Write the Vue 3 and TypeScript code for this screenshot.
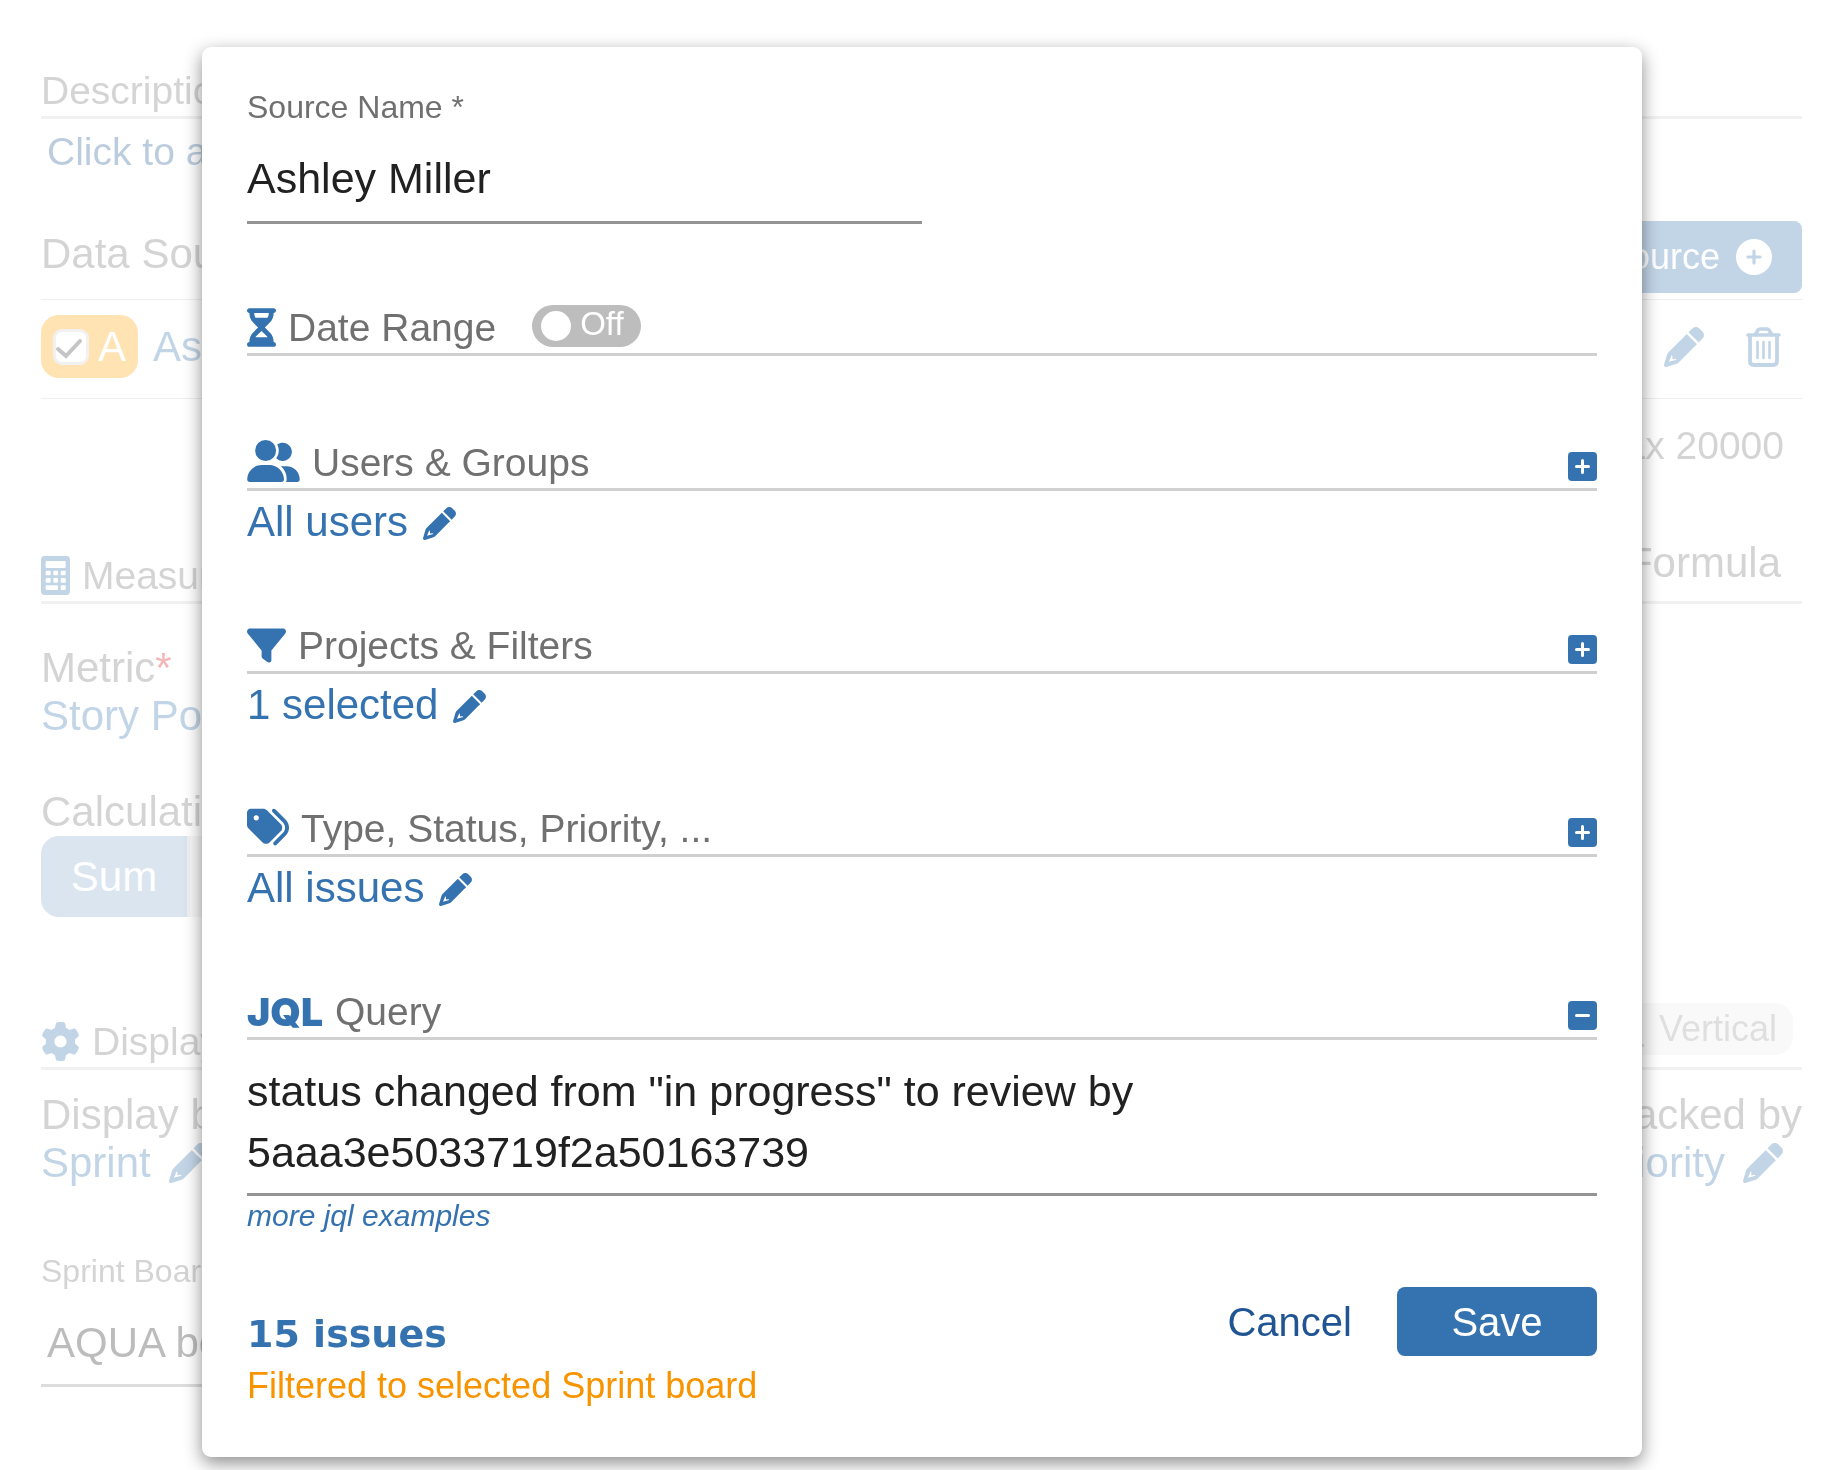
<script setup lang="ts">
import { ref } from 'vue'

interface FilterSection {
  id: string
  title: string
  value: string
  icon: string
  box: string
  width: number
  height: number
}

const pencil =
  'M410.3 231l11.3-11.3-33.9-33.9-62.1-62.1L291.7 89.8l-11.3 11.3-22.6 22.6L58.6 322.9c-10.4 10.4-18 23.3-22.2 37.4L1 480.7c-2.5 8.4-.2 17.5 6.1 23.7s15.3 8.5 23.7 6.1l120.3-35.4c14.1-4.2 27-11.8 37.4-22.2L387.7 253.7 410.3 231zM98 360L62 446L160 418Q154 406 142 408L112 412Q104 398 108 384Q108 368 98 360zM362.7 18.7L348.3 33.2 325.7 55.8 314.3 67.1l33.9 33.9 62.1 62.1 33.9 33.9 11.3-11.3 22.6-22.6 14.5-14.5c25-25 25-65.5 0-90.5L453.3 18.7c-25-25-65.5-25-90.5 0z'
const hourglass =
  'M32 0C14.3 0 0 14.3 0 32S14.3 64 32 64l0 11c0 42.4 16.9 83.1 46.9 113.1L146.7 256 78.9 323.9C48.9 353.9 32 394.6 32 437l0 11c-17.7 0-32 14.3-32 32s14.3 32 32 32l320 0c17.7 0 32-14.3 32-32s-14.3-32-32-32l0-11c0-42.4-16.9-83.1-46.9-113.1L237.3 256l67.9-67.9c30-30 46.9-70.7 46.9-113.1l0-11c17.7 0 32-14.3 32-32s-14.3-32-32-32L32 0zM96 75l0-11 192 0 0 11c0 19-5.6 37.4-16 53L112 128c-10.3-15.6-16-34-16-53zm16 309c3.5-5.3 7.6-10.3 12.1-14.9L192 301.3l67.9 67.9c4.6 4.6 8.6 9.6 12.1 14.9L112 384z'
const gear =
  'M495.9 166.6c3.2 8.7 .5 18.4-6.4 24.6l-43.3 39.4c1.1 8.3 1.7 16.8 1.7 25.4s-.6 17.1-1.7 25.4l43.3 39.4c6.9 6.2 9.6 15.9 6.4 24.6c-4.4 11.9-9.7 23.3-15.8 34.3l-4.7 8.1c-6.6 11-14 21.4-22.1 31.2c-5.9 7.2-15.7 9.6-24.5 6.8l-55.7-17.7c-13.4 10.3-28.2 18.9-44 25.4l-12.5 57.1c-2 9.1-9 16.3-18.2 17.8c-13.8 2.3-28 3.5-42.5 3.5s-28.7-1.2-42.5-3.5c-9.2-1.5-16.2-8.7-18.2-17.8l-12.5-57.1c-15.8-6.5-30.6-15.1-44-25.4L83.1 425.9c-8.8 2.8-18.6 .3-24.5-6.8c-8.1-9.8-15.5-20.2-22.1-31.2l-4.7-8.1c-6.1-11-11.4-22.4-15.8-34.3c-3.2-8.7-.5-18.4 6.4-24.6l43.3-39.4C64.6 273.1 64 264.6 64 256s.6-17.1 1.7-25.4L22.4 191.2c-6.9-6.2-9.6-15.9-6.4-24.6c4.4-11.9 9.7-23.3 15.8-34.3l4.7-8.1c6.6-11 14-21.4 22.1-31.2c5.9-7.2 15.7-9.6 24.5-6.8l55.7 17.7c13.4-10.3 28.2-18.9 44-25.4l12.5-57.1c2-9.1 9-16.3 18.2-17.8C227.3 1.2 241.5 0 256 0s28.7 1.2 42.5 3.5c9.2 1.5 16.2 8.7 18.2 17.8l12.5 57.1c15.8 6.5 30.6 15.1 44 25.4l55.7-17.7c8.8-2.8 18.6-.3 24.5 6.8c8.1 9.8 15.5 20.2 22.1 31.2l4.7 8.1c6.1 11 11.4 22.4 15.8 34.3zM256 336a80 80 0 1 0 0-160 80 80 0 1 0 0 160z'

const sections: FilterSection[] = [
  {
    id: 'users',
    title: 'Users & Groups',
    value: 'All users',
    box: '0 0 640 512',
    width: 53,
    height: 42,
    icon: 'M96 128a128 128 0 1 1 256 0A128 128 0 1 1 96 128zM0 482.3C0 383.8 79.8 304 178.3 304l91.4 0C368.2 304 448 383.8 448 482.3c0 16.4-13.3 29.7-29.7 29.7L29.7 512C13.3 512 0 498.7 0 482.3zM609.3 512l-137.8 0c5.4-9.4 8.6-20.3 8.6-32l0-8c0-60.7-27.1-115.2-69.8-151.8c2.4-.1 4.7-.2 7.1-.2l61.4 0C567.8 320 640 392.2 640 481.3c0 17-13.8 30.7-30.7 30.7zM432 256c-31 0-59-12.6-79.3-32.9C372.4 196.5 384 163.6 384 128c0-26.8-6.6-52.1-18.3-74.3C384.3 40.1 407.2 32 432 32c61.9 0 112 50.1 112 112s-50.1 112-112 112z',
  },
  {
    id: 'projects',
    title: 'Projects & Filters',
    value: '1 selected',
    box: '0 0 512 512',
    width: 39,
    height: 39,
    icon: 'M3.9 54.9C10.5 40.9 24.5 32 40 32l432 0c15.5 0 29.5 8.9 36.1 22.9s4.6 30.5-5.2 42.5L320 320.9 320 448c0 12.1-6.8 23.2-17.7 28.6s-23.8 4.3-33.5-3l-64-48c-8.1-6-12.8-15.5-12.8-25.6l0-79.1L9 97.3C-.7 85.4-2.8 68.8 3.9 54.9z',
  },
  {
    id: 'types',
    title: 'Type, Status, Priority, ...',
    value: 'All issues',
    box: '0 0 512 512',
    width: 42,
    height: 42,
    icon: 'M345 39.1L472.8 168.4c52.4 53 52.4 138.2 0 191.2L360.8 472.9c-9.3 9.4-24.5 9.5-33.9 .2s-9.5-24.5-.2-33.9L438.6 325.9c33.9-34.3 33.9-89.4 0-123.7L310.9 72.9c-9.3-9.4-9.2-24.6 .2-33.9s24.6-9.2 33.9 .2zM0 229.5L0 80C0 53.5 21.5 32 48 32l149.5 0c17 0 33.3 6.7 45.3 18.7l168 168c25 25 25 65.5 0 90.5L277.3 442.7c-25 25-65.5 25-90.5 0l-168-168C6.7 262.7 0 246.5 0 229.5zM144 144a32 32 0 1 0 -64 0 32 32 0 1 0 64 0z',
  },
]

const sourceName = ref('Ashley Miller')
const dateRange = ref(false)
const sourceEnabled = ref(true)
const board = ref('AQUA board')
const jql = ref('status changed from "in progress" to review by 5aaa3e5033719f2a50163739')
</script>

<template>
  <div class="stage">
    <main class="page">
      <h2 class="head first">Description</h2>
      <a class="describe" href="#">Click to add</a>

      <div class="sources-bar">
        <h2 class="sources-title">Data Sources</h2>
        <button class="add" type="button">
          Add Source
          <svg width="36" height="36" viewBox="0 0 36 36" aria-hidden="true">
            <path
              fill="#fff"
              d="M18 0a18 18 0 1 1 0 36a18 18 0 1 1 0-36zM16.4 12v4.4H12a1.6 1.6 0 0 0 0 3.2h4.4V24a1.6 1.6 0 0 0 3.2 0v-4.4H24a1.6 1.6 0 0 0 0-3.2h-4.4V12a1.6 1.6 0 0 0-3.2 0z"
            />
          </svg>
        </button>
      </div>
      <div class="source">
        <label class="badge">
          <span class="tick">
            <input v-model="sourceEnabled" type="checkbox" />
            <svg v-if="sourceEnabled" width="36" height="36" viewBox="0 0 36 36" aria-hidden="true">
              <path d="M5 20l8 7L27 12" fill="none" stroke="#3c3c3c" stroke-width="4" stroke-linecap="round" />
            </svg>
          </span>
          A
        </label>
        <a class="source-name" href="#">Ashley Miller</a>
        <button class="icon-button" type="button" aria-label="Edit source">
          <svg width="40" height="40" viewBox="0 0 512 512"><path :d="pencil" /></svg>
        </button>
        <button class="icon-button" type="button" aria-label="Delete source">
          <svg class="outline" width="35" height="40" viewBox="0 0 35 40">
            <path d="M2 8h31M9 8l3-5q1-1 2-1h7q1 0 2 1l3 5" stroke-width="3.6" />
            <path d="M4 9v25q0 4 4 4h19q4 0 4-4V9" stroke-width="3.8" />
            <path d="M11.5 15v16M17.5 15v16M23.5 15v16" stroke-width="2.6" />
          </svg>
        </button>
      </div>
      <p class="limit">Max 20000</p>

      <div class="head tall measure">
        <svg class="head-icon" width="29" height="39" viewBox="0 0 87 117" aria-hidden="true">
          <path
            d="M11 0h65q11 0 11 11v95q0 11-11 11H11q-11 0-11-11V11Q0 0 11 0zM17 15q-3 0-3 3v15q0 3 3 3h54q3 0 3-3V18q0-3-3-3zM17 44q-3 0-3 3v8q0 3 3 3h9q3 0 3-3v-8q0-3-3-3zM40 44q-3 0-3 3v8q0 3 3 3h8q3 0 3-3v-8q0-3-3-3zM62 44q-3 0-3 3v8q0 3 3 3h9q3 0 3-3v-8q0-3-3-3zM17 66q-3 0-3 3v8q0 3 3 3h9q3 0 3-3v-8q0-3-3-3zM40 66q-3 0-3 3v8q0 3 3 3h8q3 0 3-3v-8q0-3-3-3zM62 66q-3 0-3 3v8q0 3 3 3h9q3 0 3-3v-8q0-3-3-3zM17 88q-3 0-3 3v8q0 3 3 3h31q3 0 3-3v-8q0-3-3-3zM62 88q-3 0-3 3v8q0 3 3 3h9q3 0 3-3v-8q0-3-3-3z"
          />
        </svg>
        <h2>Measure</h2>
        <span class="formula">Formula</span>
      </div>
      <div class="field metric">
        <span>Metric<span class="required">*</span></span>
        <a href="#">Story Points</a>
      </div>
      <div class="field calculation">
        <span>Calculation</span>
        <div class="segments">
          <button type="button">Sum</button>
          <span class="segment-rest"></span>
        </div>
      </div>

      <div class="head tall display">
        <svg class="head-icon" width="39" height="39" viewBox="0 0 512 512" aria-hidden="true"><path :d="gear" /></svg>
        <h2>Display</h2>
        <button class="vertical" type="button">
          <svg width="30" height="36" viewBox="0 0 30 36" aria-hidden="true">
            <path d="M5 32V20M13 32V8M21 32V14M1 34.5h28" fill="none" stroke="currentColor" stroke-width="3" />
          </svg>
          <span>Vertical</span>
        </button>
      </div>
      <div class="axes">
        <div class="field">
          <span>Display by</span>
          <a class="axis-link" href="#">
            Sprint
            <svg width="40" height="40" viewBox="0 0 512 512" aria-hidden="true"><path :d="pencil" /></svg>
          </a>
        </div>
        <div class="field">
          <span>Stacked by</span>
          <a class="axis-link" href="#">
            Priority
            <svg width="40" height="40" viewBox="0 0 512 512" aria-hidden="true"><path :d="pencil" /></svg>
          </a>
        </div>
      </div>
      <div class="board">
        <label for="board">Sprint Board</label>
        <select id="board" v-model="board">
          <option>AQUA board</option>
        </select>
      </div>
    </main>

    <div class="overlay">
      <form class="dialog" role="dialog" aria-label="Source" @submit.prevent>
        <div class="name">
          <label for="source-name">Source Name *</label>
          <input id="source-name" v-model="sourceName" type="text" />
        </div>

        <div class="head tall date">
          <svg class="head-icon" width="29" height="39" viewBox="0 0 384 512" aria-hidden="true">
            <path :d="hourglass" />
          </svg>
          <h2>Date Range</h2>
          <label class="toggle">
            <input v-model="dateRange" type="checkbox" role="switch" />
            <span>{{ dateRange ? 'On' : 'Off' }}</span>
          </label>
        </div>

        <section v-for="section in sections" :key="section.id" class="filter">
          <div class="head tall">
            <svg
              class="head-icon"
              :width="section.width"
              :height="section.height"
              :viewBox="section.box"
              aria-hidden="true"
            >
              <path :d="section.icon" />
            </svg>
            <h2>{{ section.title }}</h2>
            <button class="expand" type="button" :aria-label="`Expand ${section.title}`">
              <svg width="15" height="15" viewBox="0 0 15 15">
                <path d="M7.5 1.5v12M1.5 7.5h12" stroke="#fff" stroke-width="3" stroke-linecap="round" />
              </svg>
            </button>
          </div>
          <a class="value" href="#">
            {{ section.value }}
            <svg width="33" height="33" viewBox="0 0 512 512" aria-hidden="true"><path :d="pencil" /></svg>
          </a>
        </section>

        <section>
          <div class="head tall">
            <span class="jql-mark">JQL</span>
            <h2>Query</h2>
            <button class="expand" type="button" aria-label="Collapse Query">
              <svg width="15" height="15" viewBox="0 0 15 15">
                <path d="M1.5 7.5h12" stroke="#fff" stroke-width="3" stroke-linecap="round" />
              </svg>
            </button>
          </div>
          <textarea v-model="jql" class="query" rows="2" aria-label="JQL query" spellcheck="false"></textarea>
          <a class="examples" href="#">more jql examples</a>
        </section>

        <footer class="footer">
          <div class="summary">
            <strong>15 issues</strong>
            <span>Filtered to selected Sprint board</span>
          </div>
          <button class="cancel" type="button">Cancel</button>
          <button class="save" type="submit">Save</button>
        </footer>
      </form>
    </div>
  </div>
</template>

<style>
body {
  margin: 0;
  background: #fff;
}
</style>

<style scoped>
.stage {
  --blue: #3572b0;
  --navy: #205493;
  --grey: #707070;
  --ink: #212121;
  display: grid;
  grid-template-columns: minmax(0, 1fr);
  min-height: 100vh;
  font-family: 'Liberation Sans', Arial, sans-serif;
  font-size: 42px;
  line-height: 48px;
  color: var(--grey);
}

.stage * {
  box-sizing: border-box;
}

.page,
.overlay {
  grid-area: 1 / 1;
}

h2,
p {
  margin: 0;
  font-weight: 400;
}

a {
  color: var(--blue);
  text-decoration: none;
}

button,
input,
textarea,
select {
  margin: 0;
  padding: 0;
  border: 0;
  border-radius: 0;
  background: none;
  color: inherit;
  font: inherit;
}

svg {
  display: block;
  flex: none;
  fill: currentColor;
  fill-rule: evenodd;
}

.head {
  border-bottom: 3px solid #d0d0d0;
  font-size: 39px;
  line-height: 50px;
}

.head h2 {
  font-size: 39px;
}

.head.tall {
  display: flex;
  align-items: flex-end;
  gap: 12px;
}

.head-icon {
  margin-bottom: 6px;
  color: var(--blue);
}

/* Settings page behind the dialog */
.page {
  padding: 66px 38px 0 41px;
  opacity: 0.3;
}

.describe {
  display: block;
  margin-top: 8px;
  padding-left: 6px;
  color: var(--navy);
  font-size: 39px;
  line-height: 50px;
}

.sources-bar {
  display: flex;
  justify-content: space-between;
  margin-top: 44px;
  padding-bottom: 6px;
  border-bottom: 1px solid #c8c8c8;
}

.sources-title {
  font-size: 42px;
  line-height: 66px;
}

.add {
  display: flex;
  align-items: center;
  gap: 16px;
  height: 72px;
  padding: 0 30px;
  border-radius: 8px;
  background: var(--blue);
  color: #fff;
  font-size: 36px;
}

.source {
  display: flex;
  align-items: center;
  padding: 15px 21px 20px 0;
  border-bottom: 1px solid #c8c8c8;
}

.badge {
  display: flex;
  align-items: center;
  gap: 9px;
  height: 63px;
  padding: 0 12px;
  border-radius: 18px;
  background: #ffa200;
  color: #fff;
  line-height: 50px;
}

.tick {
  display: grid;
}

.tick > * {
  grid-area: 1 / 1;
}

.tick input {
  appearance: none;
  width: 36px;
  height: 36px;
  border: 3px solid #d0d0d0;
  border-radius: 9px;
  background: #fff;
}

.source-name {
  flex: 1;
  margin-left: 15px;
  line-height: 50px;
}

.icon-button {
  margin-left: 42px;
  color: var(--blue);
}

.outline {
  fill: none;
  stroke: currentColor;
  stroke-linecap: round;
}

.limit {
  margin-top: 22px;
  padding-right: 18px;
  font-size: 39px;
  line-height: 50px;
  text-align: right;
}

.measure {
  height: 67px;
  margin-top: 66px;
}

.formula {
  margin: 0 21px 13px auto;
  font-size: 42px;
}

.field {
  display: flex;
  flex-direction: column;
  align-items: flex-start;
}

.metric {
  margin-top: 40px;
}

.required {
  color: #de0a0a;
}

.calculation {
  margin-top: 48px;
}

.segments {
  display: flex;
  overflow: hidden;
  border-radius: 18px;
  opacity: 0.6;
}

.segments button {
  width: 146px;
  height: 81px;
  background: var(--blue);
  color: #fff;
}

.segment-rest {
  width: 140px;
  border-left: 3px solid #b4b4b4;
  background: #d8d8d8;
}

.display {
  height: 67px;
  margin-top: 86px;
}

.vertical {
  display: flex;
  align-items: center;
  gap: 14px;
  align-self: flex-start;
  height: 52px;
  margin: 0 9px 0 auto;
  padding: 0 16px;
  border-radius: 18px;
  background: #ebebeb;
  color: #939393;
  font-size: 36px;
}

.axes {
  display: flex;
  justify-content: space-between;
  margin-top: 21px;
}

.axis-link {
  display: flex;
  align-items: center;
  gap: 18px;
}

.board {
  display: flex;
  flex-direction: column;
  width: 33%;
  margin-top: 64px;
}

.board label {
  font-size: 32px;
  line-height: 40px;
}

.board select {
  appearance: none;
  height: 96px;
  padding: 10px 0 0 6px;
  border-bottom: 3px solid #8c8c8c;
  color: var(--ink);
}

/* Dialog */
.overlay {
  z-index: 1;
  padding: 47px 198px 13px 202px;
}

.dialog {
  padding: 42px 45px 49px;
  border-radius: 9px;
  background: #fff;
  box-shadow: 0 6px 18px rgba(0, 0, 0, 0.45);
}

.name {
  display: flex;
  flex-direction: column;
  width: 50%;
}

.name label {
  font-size: 32px;
  line-height: 36px;
}

.name input {
  height: 89px;
  margin-top: 10px;
  border-bottom: 3px solid #949494;
  color: var(--ink);
  font-size: 43px;
}

.date {
  margin: 75px 0 78px;
}

.dialog .head {
  height: 57px;
}

.toggle {
  display: flex;
  align-items: center;
  gap: 9px;
  width: 109px;
  height: 42px;
  margin: 0 0 6px 24px;
  padding-left: 9px;
  border-radius: 21px;
  background: #bdbdbd;
  color: #fff;
  font-size: 33px;
  line-height: 38px;
}

.toggle span {
  align-self: flex-start;
}

.toggle input {
  appearance: none;
  width: 30px;
  height: 30px;
  border-radius: 50%;
  background: #fff;
}

.expand {
  display: grid;
  place-items: center;
  width: 29px;
  height: 29px;
  margin: 0 0 7px auto;
  border-radius: 4px;
  background: var(--blue);
}

.value {
  display: flex;
  align-items: center;
  gap: 15px;
  width: fit-content;
  margin-bottom: 64px;
  line-height: 62px;
}

.value svg {
  margin-top: 3px;
}

.jql-mark {
  color: var(--blue);
  font-family: 'Arial Black', Inter, sans-serif;
  font-size: 39px;
  font-weight: 900;
}

.query {
  display: block;
  width: 100%;
  height: 156px;
  padding: 21px 0 10px;
  border-bottom: 3px solid #949494;
  color: var(--ink);
  font-size: 43px;
  line-height: 61px;
  resize: none;
  overflow: hidden;
}

.examples {
  display: block;
  width: fit-content;
  font-size: 30px;
  font-style: italic;
  line-height: 40px;
}

.footer {
  display: flex;
  align-items: flex-start;
  margin-top: 51px;
}

.summary {
  display: flex;
  flex: 1;
  flex-direction: column;
  gap: 5px;
  padding-top: 22px;
}

.summary strong {
  color: var(--blue);
  font-family: 'Arial Black', 'DejaVu Sans', sans-serif;
  font-size: 38px;
  font-weight: 900;
  line-height: 50px;
}

.summary span {
  color: #f79400;
  font-size: 36px;
  line-height: 44px;
}

.cancel,
.save {
  height: 69px;
  font-size: 40px;
}

.cancel {
  margin-right: 45px;
  color: var(--navy);
}

.save {
  width: 200px;
  border-radius: 8px;
  background: var(--blue);
  color: #fff;
}
</style>
